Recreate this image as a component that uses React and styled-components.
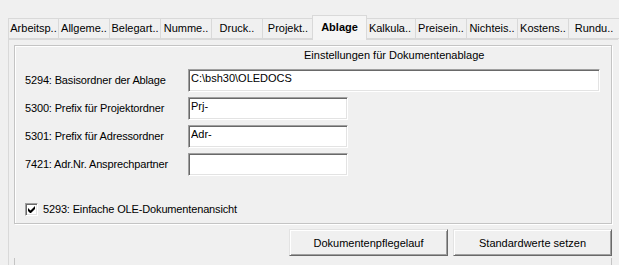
import React from 'react';
import styled, { createGlobalStyle } from 'styled-components';

const GlobalStyle = createGlobalStyle`
  html, body {
    margin: 0;
    background: #f0f0f0;
  }
  body {
    font-family: "Liberation Sans", Arial, sans-serif;
    font-size: 11px;
    color: #000;
  }
`;

const Window = styled.div`
  width: 619px;
  height: 265px;
  overflow: hidden;
  padding-top: 18px;
  box-sizing: border-box;
`;

const TabStrip = styled.div`
  display: flex;
  margin-left: 8px;
  height: 21px;
  position: relative;
  z-index: 1;
`;

const Tab = styled.div`
  flex: 0 0 ${p => (p.$active ? 55 : 51)}px;
  box-sizing: border-box;
  margin: ${p => (p.$active ? '-3px -2px -1px' : '0')};
  height: ${p => (p.$active ? 25 : 21)}px;
  border: 1px solid #d9d9d9;
  border-bottom: ${p => (p.$active ? 'none' : '1px solid #d9d9d9')};
  border-left-width: ${p => (p.$first || p.$active ? 1 : 0)}px;
  background: ${p => (p.$active ? '#f5f5f5' : '#f0f0f0')};
  font-weight: ${p => (p.$active ? 'bold' : 'normal')};
  position: relative;
  z-index: ${p => (p.$active ? 2 : 1)};
  display: flex;
  align-items: ${p => (p.$active ? 'flex-start' : 'center')};
  padding-top: ${p => (p.$active ? 5 : 0)}px;
  justify-content: center;
  white-space: nowrap;
  line-height: 13px;
`;

const Panel = styled.div`
  margin-left: 8px;
  width: 610px;
  height: 230px;
  box-sizing: border-box;
  border-top: 1px solid #d9d9d9;
  border-left: 1px solid #d9d9d9;
  padding: 5px 0 0 5px;
  display: flex;
  flex-direction: column;
`;

const GroupBox = styled.div`
  width: 598px;
  height: 179px;
  box-sizing: border-box;
  border: 1px solid #c4c4c4;
  box-shadow: inset 1px 1px 0 #fff, 1px 1px 0 #fff;
  display: flex;
  flex-direction: column;
`;

const GroupHeader = styled.div`
  height: 16px;
  padding: 3px 0 0 289px;
  line-height: 13px;
  box-sizing: border-box;
`;

const FieldGrid = styled.div`
  display: grid;
  grid-template-columns: 163px auto;
  row-gap: 5px;
  padding: 7px 0 0 10px;
  align-items: center;
`;

const Label = styled.div`
  line-height: 13px;
  white-space: nowrap;
  letter-spacing: -0.15px;
`;

const TextBox = styled.input`
  width: ${p => p.$w}px;
  height: 23px;
  box-sizing: border-box;
  margin: 0;
  padding: 1px 2px 7px;
  font: inherit;
  color: #000;
  background: #fff;
  border: 1px solid;
  border-color: #a0a0a0 #fff #fff #a0a0a0;
  box-shadow: inset 1px 1px 0 #696969, inset -1px -1px 0 #e3e3e3;
  outline: none;
`;

const CheckRow = styled.label`
  display: flex;
  align-items: center;
  gap: 5px;
  margin: 27px 0 0 10px;
  line-height: 13px;
  letter-spacing: -0.15px;
`;

const CheckBox = styled.span`
  width: 13px;
  height: 13px;
  box-sizing: border-box;
  background: #fff;
  border: 1px solid;
  border-color: #a0a0a0 #fff #fff #a0a0a0;
  box-shadow: inset 1px 1px 0 #696969, inset -1px -1px 0 #e3e3e3;
  display: flex;
  align-items: center;
  justify-content: center;
`;

const ButtonRow = styled.div`
  display: flex;
  justify-content: flex-end;
  gap: 5px;
  width: 598px;
  margin-top: 5px;
`;

const Button = styled.button`
  width: 159px;
  height: 27px;
  box-sizing: border-box;
  margin: 0;
  padding: 0;
  font: inherit;
  color: #000;
  background: #f0f0f0;
  border: 1px solid;
  border-color: #e3e3e3 #696969 #696969 #e3e3e3;
  box-shadow: inset 1px 1px 0 #fff, inset -1px -1px 0 #a0a0a0;
`;

const NextGroup = styled.div`
  width: 598px;
  flex: 1;
  margin-top: 2px;
  box-sizing: border-box;
  border-left: 1px solid #c4c4c4;
  border-right: 1px solid #c4c4c4;
`;

const tabs = [
  'Arbeitsp..', 'Allgeme..', 'Belegart..', 'Numme..', 'Druck..', 'Projekt..',
  'Ablage', 'Kalkula..', 'Preisein..', 'Nichteis..', 'Kostens..', 'Rundu..',
];

const fields = [
  { label: '5294: Basisordner der Ablage', value: 'C:\\bsh30\\OLEDOCS', w: 412 },
  { label: '5300: Prefix für Projektordner', value: 'Prj-', w: 160 },
  { label: '5301: Prefix für Adressordner', value: 'Adr-', w: 160 },
  { label: '7421: Adr.Nr. Ansprechpartner', value: '', w: 160 },
];

export default function App() {
  return (
    <Window>
      <GlobalStyle />
      <TabStrip>
        {tabs.map((t, i) => (
          <Tab key={t} $first={i === 0} $active={t === 'Ablage'}>{t}</Tab>
        ))}
      </TabStrip>
      <Panel>
        <GroupBox>
          <GroupHeader>Einstellungen für Dokumentenablage</GroupHeader>
          <FieldGrid>
            {fields.map(f => (
              <React.Fragment key={f.label}>
                <Label>{f.label}</Label>
                <TextBox $w={f.w} value={f.value} readOnly />
              </React.Fragment>
            ))}
          </FieldGrid>
          <CheckRow>
            <CheckBox>
              <svg width="7" height="7" viewBox="0 0 7 7">
                <path d="M0 2v3l2 2h1l4-4V0L2.5 4.5z" fill="#000" />
              </svg>
            </CheckBox>
            5293: Einfache OLE-Dokumentenansicht
          </CheckRow>
        </GroupBox>
        <ButtonRow>
          <Button>Dokumentenpflegelauf</Button>
          <Button>Standardwerte setzen</Button>
        </ButtonRow>
        <NextGroup />
      </Panel>
    </Window>
  );
}
